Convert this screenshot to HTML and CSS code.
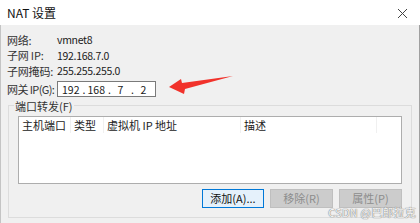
FILE: index.html
```html
<!DOCTYPE html>
<html lang="zh-CN">
<head>
<meta charset="UTF-8">
<meta name="viewport" content="width=device-width, initial-scale=1.0">
<title>NAT 设置</title>
<link rel="stylesheet" href="styles.css">
</head>
<body>
<div class="titlebar">
    <span class="title">NAT 设置</span>
    <svg class="close" width="11" height="11" viewBox="0 0 11 11">
        <path d="M1 1 L10 10 M10 1 L1 10" stroke="#444" stroke-width="1" fill="none"/>
    </svg>
</div>

<div class="dialog">
    <div class="info">
        <div class="row"><span class="label">网络:</span><span class="val">vmnet8</span></div>
        <div class="row"><span class="label">子网 IP:</span><span class="val">192.168.7.0</span></div>
        <div class="row"><span class="label">子网掩码:</span><span class="val">255.255.255.0</span></div>
        <div class="row gw">
            <span class="label">网关 IP(G):</span>
            <div class="ipbox">
                <span class="seg">192</span><span class="dot">.</span>
                <span class="seg">168</span><span class="dot">.</span>
                <span class="seg">7</span><span class="dot">.</span>
                <span class="seg">2</span>
            </div>
        </div>
    </div>

    <fieldset class="group">
        <legend>端口转发(F)</legend>
        <div class="list">
            <div class="list-head">
                <span class="col c1">主机端口</span>
                <span class="col c2">类型</span>
                <span class="col c3">虚拟机 IP 地址</span>
                <span class="col c4">描述</span>
                <span class="col c5"></span>
            </div>
        </div>
        <div class="buttons">
            <button class="btn focus">添加(A)...</button>
            <button class="btn" disabled>移除(R)</button>
            <button class="btn" disabled>属性(P)</button>
        </div>
    </fieldset>
</div>

<!-- annotation arrow -->
<svg class="arrow" width="420" height="223" viewBox="0 0 420 223">
    <polygon points="169,87 181,79 182,83 233,76 185,89 184,94" fill="#f1322b"/>
</svg>

<div class="watermark">CSDN @巴郎拉克</div>
</body>
</html>
```

FILE: styles.css
```css
/* NAT dialog */
body {
    margin: 0;
    width: 420px;
    height: 223px;
    overflow: hidden;
    position: relative;
    font-family: "Noto Sans CJK SC", sans-serif;
    font-size: 11px;
    color: #1a1a1a;
    background-color: #f0f0f0;
    white-space: nowrap;
}

.titlebar {
    height: 25px;
    background-color: #fff;
    display: flex;
    align-items: center;
    justify-content: space-between;
    padding: 0 12px 0 7px;
}

.title {
    font-size: 12px;
    color: #111;
}

.close {
    display: block;
    margin-top: 1px;
}

.dialog {
    height: 198px;
    box-sizing: border-box;
    border-left: 1px solid #c4c4c4;
    border-right: 1px solid #a0a0a0;
    padding-top: 7px;
}

.info {
    padding-left: 6px;
}

.row {
    display: flex;
    align-items: center;
    height: 15.5px;
}

.label {
    flex: 0 0 50px;
    color: #333;
    letter-spacing: -0.2px;
}

.row.gw .label {
    letter-spacing: -0.6px;
}

.val {
    font-size: 10.5px;
    letter-spacing: -0.3px;
}

.row.gw {
    margin-top: 2px;
    height: 17px;
}

.ipbox {
    flex: 0 0 auto;
    width: 93px;
    height: 14px;
    border: 1px solid #7a7a7a;
    background-color: #fff;
    display: flex;
    align-items: center;
    padding-left: 4px;
    font-size: 10.5px;
}

.seg {
    flex: 0 0 15px;
    text-align: center;
}

.dot {
    flex: 0 0 8px;
    text-align: center;
    padding-left: 1px;
    box-sizing: border-box;
}

.group {
    margin: 1px 7px 0 7px;
    padding: 0 9px 9px 9px;
    border: 1px solid #dcdcdc;
    min-width: 0;
}

.group legend {
    margin-left: -4px;
    padding: 0 1px;
    color: #333;
    line-height: 14px;
}

.list {
    margin-top: 3px;
    height: 66px;
    background-color: #fff;
    border: 1px solid #adadad;
}

.list-head {
    display: flex;
    height: 16px;
    align-items: center;
}

.col {
    flex: 0 0 auto;
    height: 16px;
    line-height: 16px;
    padding-left: 3px;
    box-sizing: border-box;
    border-right: 1px solid #f0f0f0;
    color: #222;
}

.c1 { width: 52px; }
.c2 { width: 33px; }
.c3 { width: 137px; }
.c4 { width: 136px; }
.c5 { flex: 1; border-right: none; }

.buttons {
    display: flex;
    justify-content: flex-end;
    gap: 6px;
    margin-top: 5px;
}

.btn {
    height: 19px;
    padding: 0;
    font-family: inherit;
    font-size: 11px;
    background-color: #e1e1e1;
    border: 1px solid #adadad;
    color: #111;
}

.btn.focus {
    width: 62px;
    border-color: #0078d7;
    background-color: #e5f1fb;
}

.btn:disabled {
    width: 63px;
    background-color: #cccccc;
    border-color: #bfbfbf;
    color: #8d8d8d;
}

.arrow {
    position: absolute;
    left: 0;
    top: 0;
    pointer-events: none;
}

.watermark {
    position: absolute;
    right: 4px;
    bottom: 3px;
    font-size: 11px;
    color: #f4f4f4;
    text-shadow: 0 0 1px #777, 0 0 1px #777;
    letter-spacing: 0.2px;
}
```
